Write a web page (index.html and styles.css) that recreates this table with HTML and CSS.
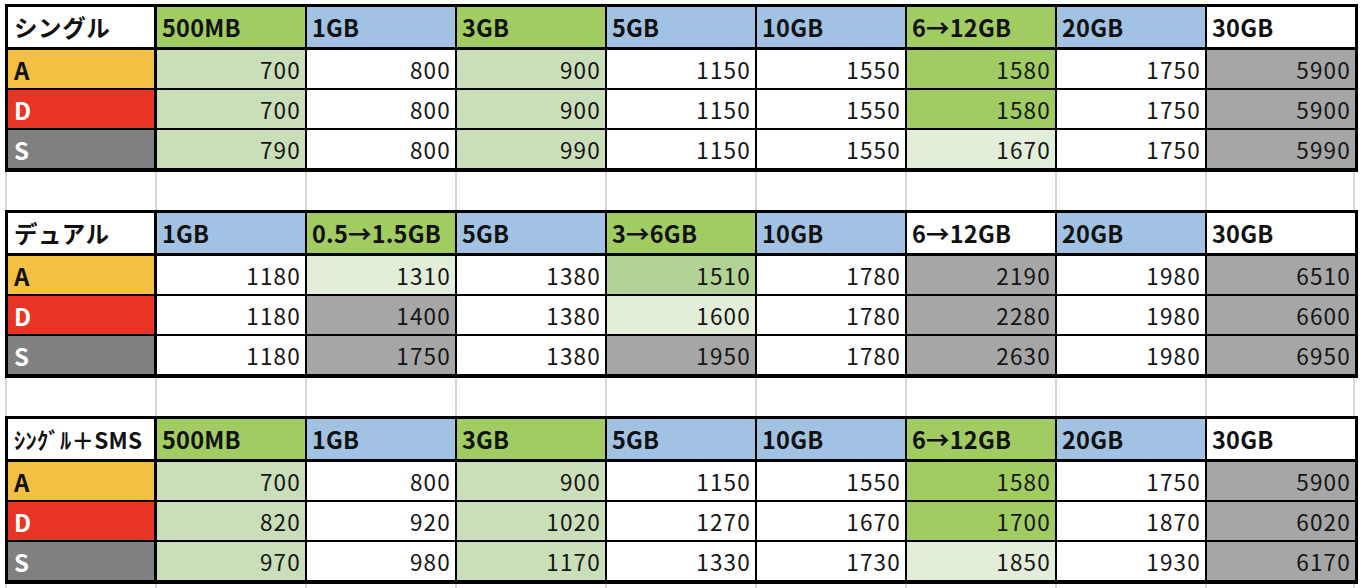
FILE: index.html
```html
<!DOCTYPE html>
<html lang="ja">
<head>
<meta charset="utf-8">
<title>料金表</title>
<link rel="stylesheet" href="styles.css">
</head>
<body>
<div class="sheet">
  <div class="tbl">
    <div class="row head">
      <div class="c lab">シングル</div>
      <div class="c g">500MB</div>
      <div class="c b">1GB</div>
      <div class="c g">3GB</div>
      <div class="c b">5GB</div>
      <div class="c b">10GB</div>
      <div class="c g">6→12GB</div>
      <div class="c b">20GB</div>
      <div class="c">30GB</div>
    </div>
    <div class="row">
      <div class="c lab ya">A</div>
      <div class="c n lg">700</div><div class="c n">800</div><div class="c n lg">900</div><div class="c n">1150</div><div class="c n">1550</div><div class="c n gr">1580</div><div class="c n">1750</div><div class="c n gy">5900</div>
    </div>
    <div class="row">
      <div class="c lab rd">D</div>
      <div class="c n lg">700</div><div class="c n">800</div><div class="c n lg">900</div><div class="c n">1150</div><div class="c n">1550</div><div class="c n gr">1580</div><div class="c n">1750</div><div class="c n gy">5900</div>
    </div>
    <div class="row">
      <div class="c lab sg">S</div>
      <div class="c n lg">790</div><div class="c n">800</div><div class="c n lg">990</div><div class="c n">1150</div><div class="c n">1550</div><div class="c n vl">1670</div><div class="c n">1750</div><div class="c n gy">5990</div>
    </div>
  </div>

  <div class="blank"><div></div><div></div><div></div><div></div><div></div><div></div><div></div><div></div><div></div></div>

  <div class="tbl">
    <div class="row head">
      <div class="c lab">デュアル</div>
      <div class="c b">1GB</div>
      <div class="c g">0.5→1.5GB</div>
      <div class="c b">5GB</div>
      <div class="c g">3→6GB</div>
      <div class="c b">10GB</div>
      <div class="c">6→12GB</div>
      <div class="c b">20GB</div>
      <div class="c">30GB</div>
    </div>
    <div class="row">
      <div class="c lab ya">A</div>
      <div class="c n">1180</div><div class="c n vl">1310</div><div class="c n">1380</div><div class="c n mg">1510</div><div class="c n">1780</div><div class="c n gy">2190</div><div class="c n">1980</div><div class="c n gy">6510</div>
    </div>
    <div class="row">
      <div class="c lab rd">D</div>
      <div class="c n">1180</div><div class="c n gy">1400</div><div class="c n">1380</div><div class="c n vl">1600</div><div class="c n">1780</div><div class="c n gy">2280</div><div class="c n">1980</div><div class="c n gy">6600</div>
    </div>
    <div class="row">
      <div class="c lab sg">S</div>
      <div class="c n">1180</div><div class="c n gy">1750</div><div class="c n">1380</div><div class="c n gy">1950</div><div class="c n">1780</div><div class="c n gy">2630</div><div class="c n">1980</div><div class="c n gy">6950</div>
    </div>
  </div>

  <div class="blank"><div></div><div></div><div></div><div></div><div></div><div></div><div></div><div></div><div></div></div>

  <div class="tbl">
    <div class="row head">
      <div class="c lab hw">ｼﾝｸﾞﾙ＋SMS</div>
      <div class="c g">500MB</div>
      <div class="c b">1GB</div>
      <div class="c g">3GB</div>
      <div class="c b">5GB</div>
      <div class="c b">10GB</div>
      <div class="c g">6→12GB</div>
      <div class="c b">20GB</div>
      <div class="c">30GB</div>
    </div>
    <div class="row">
      <div class="c lab ya">A</div>
      <div class="c n lg">700</div><div class="c n">800</div><div class="c n lg">900</div><div class="c n">1150</div><div class="c n">1550</div><div class="c n gr">1580</div><div class="c n">1750</div><div class="c n gy">5900</div>
    </div>
    <div class="row">
      <div class="c lab rd">D</div>
      <div class="c n lg">820</div><div class="c n">920</div><div class="c n lg">1020</div><div class="c n">1270</div><div class="c n">1670</div><div class="c n gr">1700</div><div class="c n">1870</div><div class="c n gy">6020</div>
    </div>
    <div class="row">
      <div class="c lab sg">S</div>
      <div class="c n lg">970</div><div class="c n">980</div><div class="c n lg">1170</div><div class="c n">1330</div><div class="c n">1730</div><div class="c n vl">1850</div><div class="c n">1930</div><div class="c n gy">6170</div>
    </div>
  </div>

  <div class="blank tail"><div></div><div></div><div></div><div></div><div></div><div></div><div></div><div></div><div></div></div>
</div>
</body>
</html>
```

FILE: styles.css
```css
* { box-sizing: border-box; }

html, body {
  margin: 0;
  background: #ffffff;
}

body {
  font-family: "Noto Sans CJK JP", "Noto Sans", sans-serif;
  color: #111111;
  overflow: hidden;
}

.sheet {
  padding: 4px 0 0 5px;
  width: 1364px;
}

.tbl {
  width: 1353px;
  border: 3px solid #000;
  border-bottom-width: 4px;
}

.row {
  display: grid;
  grid-template-columns: 149px repeat(7, 150px) 148px;
  height: 40px;
}

.row.head {
  height: 43px;
}

.row:last-child {
  height: 38px;
}

.c {
  display: flex;
  align-items: center;
  border-right: 2px solid #000;
  border-bottom: 2px solid #000;
  background: #ffffff;
  white-space: nowrap;
  overflow: hidden;
}

.c:last-child { border-right: none; }
.row:last-child .c { border-bottom: none; }
.head .c { border-bottom-width: 3px; }
.c.lab {
  border-right-width: 3px;
  padding-left: 6px;
  font-weight: 700;
  font-size: 24px;
}

.head .c {
  font-weight: 700;
  font-size: 23.5px;
  padding-left: 5px;
  letter-spacing: 0.2px;
}
.head .c.lab { padding-left: 6px; letter-spacing: 0.6px; }
.head .c.hw { font-size: 22.5px; letter-spacing: 0.3px; }

.c.n {
  justify-content: flex-end;
  padding-right: 4px;
  font-size: 22.5px;
  letter-spacing: 1.2px;
  font-weight: 400;
  color: #151515;
}

/* header fills */
.g  { background: #a0cc62; }
.b  { background: #a2c2e4; }

/* data fills */
.lg { background: #cadfb9; }
.vl { background: #e3eeda; }
.mg { background: #b3d296; }
.gr { background: #a0cc62; }
.gy { background: #a6a6a6; color: #262626; }

/* row labels */
.ya { background: #f4c043; color: #111; }
.rd { background: #e93323; color: #fff; }
.sg { background: #808080; color: #fff; }

/* blank spreadsheet rows with grid lines */
.blank {
  display: grid;
  grid-template-columns: repeat(9, 150px);
  height: 38px;
  width: 1352px;
}
.blank div {
  border-left: 2px solid #d6d6d6;
}
.blank div:last-child {
  border-right: 2px solid #d6d6d6;
}
.blank.tail { height: 10px; }
```
